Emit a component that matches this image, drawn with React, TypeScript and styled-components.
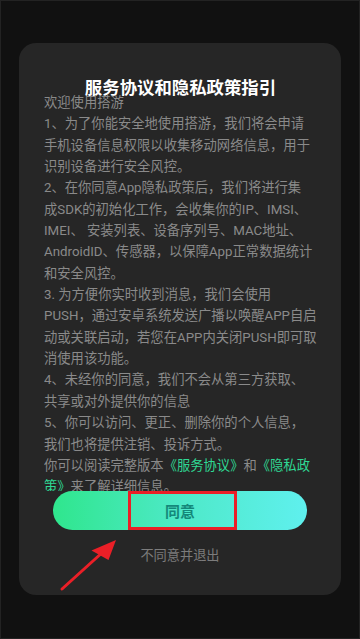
import React from "react";
import styled, { createGlobalStyle } from "styled-components";

const GlobalStyle = createGlobalStyle`
  html, body {
    margin: 0;
    padding: 0;
    background: #111111;
  }
  * {
    box-sizing: border-box;
  }
`;

const paragraphs: { lines: React.ReactNode[] }[] = [
  { lines: ["欢迎使用搭游"] },
  {
    lines: [
      "1、为了你能安全地使用搭游，我们将会申请",
      "手机设备信息权限以收集移动网络信息，用于",
      "识别设备进行安全风控。",
    ],
  },
  {
    lines: [
      "2、在你同意App隐私政策后，我们将进行集",
      "成SDK的初始化工作，会收集你的IP、IMSI、",
      "IMEI、 安装列表、设备序列号、MAC地址、",
      "AndroidID、传感器，以保障App正常数据统计",
      "和安全风控。",
    ],
  },
  {
    lines: [
      "3. 为方便你实时收到消息，我们会使用",
      "PUSH，通过安卓系统发送广播以唤醒APP自启",
      "动或关联启动，若您在APP内关闭PUSH即可取",
      "消使用该功能。",
    ],
  },
  {
    lines: ["4、未经你的同意，我们不会从第三方获取、", "共享或对外提供你的信息"],
  },
  {
    lines: ["5、你可以访问、更正、删除你的个人信息，", "我们也将提供注销、投诉方式。"],
  },
];

const App = () => {
  return (
    <Page>
      <GlobalStyle />
      <Card>
        <Title>服务协议和隐私政策指引</Title>
        <Body>
          {paragraphs.map((p, i) =>
            p.lines.map((line, j) => <Line key={`${i}-${j}`}>{line}</Line>)
          )}
          <Line>
            你可以阅读完整版本<Link>《服务协议》</Link>和<Link>《隐私政</Link>
          </Line>
          <Line>
            <Link>策》</Link>来了解详细信息。
          </Line>
        </Body>
        <ButtonWrap>
          <AgreeButton>同意</AgreeButton>
          <Highlight />
        </ButtonWrap>
        <Decline>不同意并退出</Decline>
      </Card>
      <Arrow viewBox="0 0 360 639" width="360" height="639">
        <line
          x1="62"
          y1="589"
          x2="104"
          y2="551"
          stroke="#ea1f27"
          strokeWidth="3"
          strokeLinecap="round"
        />
        <polygon points="116,540 91.5,550.5 108.5,560" fill="#ea1f27" />
      </Arrow>
    </Page>
  );
};

export default App;

const Page = styled.div`
  position: relative;
  width: 360px;
  height: 639px;
  background: #111111;
  border: 1px solid #232323;
  padding: 42px 18px 0 18px;
  font-family: Roboto, "Noto Sans CJK SC", "Noto Sans", sans-serif;
`;

const Card = styled.div`
  width: 322px;
  height: 552px;
  background: #262626;
  border-radius: 17px;
  padding: 35px 0 0 25px;
  display: flex;
  flex-direction: column;
`;

const Title = styled.div`
  width: 297px;
  margin-left: -12px;
  text-align: center;
  color: #ffffff;
  font-size: 17.4px;
  font-weight: 600;
  line-height: 20px;
  height: 20px;
  margin-bottom: -6px;
`;

const Body = styled.div`
  height: 399px;
  overflow: hidden;
  color: #8a8a8a;
  font-size: 13.3px;
  line-height: 21.35px;
`;

const Line = styled.div`
  white-space: nowrap;
`;

const Link = styled.span`
  color: #2fd894;
`;

const ButtonWrap = styled.div`
  position: relative;
  width: 254px;
  height: 39px;
  margin-left: 9px;
`;

const AgreeButton = styled.div`
  width: 100%;
  height: 100%;
  border-radius: 20px;
  background: linear-gradient(90deg, #2fe68d 0%, #4ee9c8 50%, #5ff0ee 100%);
  display: flex;
  align-items: center;
  justify-content: center;
  color: #14887a;
  font-size: 15px;
  font-weight: 700;
`;

const Highlight = styled.div`
  position: absolute;
  left: 75px;
  top: 0;
  width: 109px;
  height: 38.5px;
  border: 3px solid #ea1f27;
`;

const Decline = styled.div`
  margin-top: 16px;
  width: 272px;
  text-align: center;
  color: #7c7c7c;
  font-size: 13.2px;
  line-height: 20px;
`;

const Arrow = styled.svg`
  position: absolute;
  left: -1px;
  top: -1px;
  pointer-events: none;
`;
